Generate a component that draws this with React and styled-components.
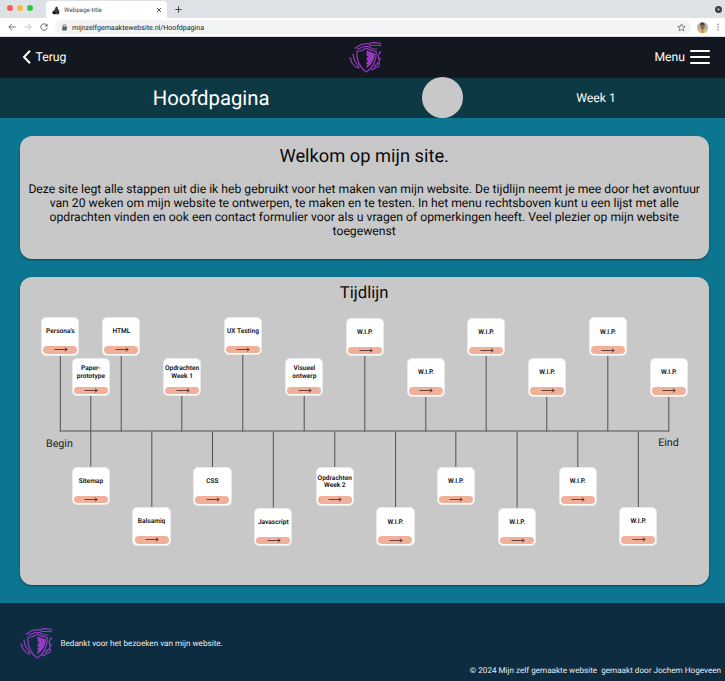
import React from 'react';
import styled, { createGlobalStyle } from 'styled-components';

const GlobalStyle = createGlobalStyle`
  * { box-sizing: border-box; }
  body { margin: 0; font-family: Roboto, "Liberation Sans", sans-serif; text-rendering: geometricPrecision; }
  svg { display: block; flex: none; }
  h1, h2, p { margin: 0; font-weight: 400; }
`;

const Page = styled.div`
  width: 725px;
  height: 681px;
  display: flex;
  flex-direction: column;
  overflow: hidden;
  background: #0c7691;
`;

const TabStrip = styled.div`
  height: 18px;
  flex: none;
  display: flex;
  align-items: flex-start;
  background: #dee1e6;
  padding-left: 6.8px;
  padding-right: 3px;
`;

const TrafficLights = styled.div`
  display: flex;
  gap: 4px;
  margin-top: 5px;
  width: 39.2px;
`;

const Light = styled.i`
  width: 6.1px;
  height: 6.1px;
  border-radius: 50%;
  background: ${(p) => p.$color};
`;

const Tab = styled.div`
  width: 121.5px;
  height: 17px;
  margin-top: 1px;
  display: flex;
  align-items: center;
  padding: 1.4px 5px 0 6px;
  background: #fff;
  border-radius: 4px 4px 0 0;
`;

const TabTitle = styled.span`
  margin-left: 4px;
  flex: 1;
  font-size: 6.2px;
  color: #45484c;
`;

const NewTab = styled.div`
  margin: 6px 0 0 8px;
  flex: 1;
`;

const TabMenu = styled.div`
  margin-top: 6px;
`;

const Toolbar = styled.div`
  height: 19px;
  flex: none;
  display: flex;
  align-items: center;
  background: #fff;
  padding: 0 4px 0 7.5px;
  border-bottom: 1px solid #dadce0;
`;

const NavIcons = styled.div`
  display: flex;
  gap: 8.3px;
  width: 47.5px;
`;

const AddressBar = styled.div`
  width: 636px;
  height: 14px;
  display: flex;
  align-items: center;
  padding: 0 5px 0 7px;
  border-radius: 7px;
  background: #f1f3f4;
`;

const Address = styled.span`
  flex: 1;
  margin-left: 5px;
  font-size: 7.1px;
  color: #202124;
`;

const Avatar = styled.div`
  margin: 0 9px 0 6px;
`;

const SiteNav = styled.header`
  height: 40.5px;
  flex: none;
  display: grid;
  grid-template-columns: 1fr auto 1fr;
  align-items: center;
  padding: 0 15px 0 22px;
  color: #fff;
  background: #13171f;
`;

const NavLink = styled.a`
  display: flex;
  align-items: center;
  justify-self: ${(p) => p.$side};
  gap: 4.5px;
  font-size: 12.2px;
`;

const LogoSlot = styled.div`
  padding-right: 2px;
`;

const Burger = styled.div`
  display: flex;
  flex-direction: column;
  gap: 4px;
  width: 20.5px;
`;

const BurgerBar = styled.i`
  height: 2px;
  border-radius: 1px;
  background: #fff;
`;

const SubHeader = styled.div`
  height: 40.5px;
  flex: none;
  display: grid;
  grid-template-columns: 422.2px 40.7px 1fr;
  align-items: center;
  color: #fff;
  background: #0d3945;
`;

const PageTitle = styled.h1`
  font-size: 20.3px;
  text-align: center;
`;

const Dot = styled.div`
  width: 40.7px;
  height: 40.7px;
  margin-top: -0.6px;
  border-radius: 50%;
  background: #c8c8c8;
`;

const WeekLabel = styled.span`
  padding-left: 4px;
  font-size: 12.2px;
  text-align: center;
`;

const Main = styled.main`
  height: 485.3px;
  flex: none;
  display: flex;
  flex-direction: column;
  gap: 18.4px;
  padding: 18.4px 16.3px 0 19.7px;
`;

const Panel = styled.section`
  height: ${(p) => p.$height}px;
  position: relative;
  flex: none;
  border-radius: 12px;
  background: #c8c8c8;
  color: #0b0b0b;
  text-align: center;
  box-shadow: 0 1px 2px rgba(0, 0, 0, 0.45);
`;

const PanelTitle = styled.h2`
  padding-top: ${(p) => p.$top}px;
  font-size: ${(p) => p.$size}px;
  line-height: 22px;
`;

const Intro = styled.p`
  margin-top: 13.7px;
  font-size: 12.19px;
  line-height: 14.17px;
`;

const IntroLine = styled.span`
  display: block;
  white-space: nowrap;
`;

const Wires = styled.svg`
  position: absolute;
  left: 0;
  top: 0;
`;

const Node = styled.article`
  position: absolute;
  left: ${(p) => p.$x}px;
  top: ${(p) => p.$y}px;
  width: 38.2px;
  height: 38.4px;
  display: flex;
  flex-direction: column;
  padding: 0 1.1px 0.9px;
  border-radius: 5px;
  border: 0.5px solid #e9e9e9;
  background: #fff;
`;

const NodeTitle = styled.div`
  flex: 1;
  display: flex;
  flex-direction: column;
  align-items: center;
  justify-content: center;
  font-size: 6.6px;
  font-weight: 600;
  line-height: 7.5px;
  white-space: nowrap;
  color: #111;
`;

const NodeButton = styled.div`
  height: 7.4px;
  display: flex;
  align-items: center;
  justify-content: center;
  padding-left: 1px;
  border-radius: 4px;
  background: #f1b09a;
`;

const EndLabel = styled.span`
  position: absolute;
  left: ${(p) => p.$x}px;
  top: ${(p) => p.$y}px;
  font-size: 10.7px;
  line-height: 12px;
  color: #1c1c1c;
`;

const Footer = styled.footer`
  flex: 1;
  display: flex;
  flex-direction: column;
  color: #e9eef1;
  background: #0e2c40;
`;

const Thanks = styled.div`
  display: flex;
  align-items: center;
  gap: 7.5px;
  padding: 23.5px 0 0 20px;
  font-size: 8.13px;
`;

const Copyright = styled.div`
  margin-top: 5.5px;
  padding-right: 4px;
  text-align: right;
  font-size: 8.15px;
  line-height: 10px;
  white-space: pre;
`;

function ShieldLogo({ size }) {
  return (
    <svg width={size} height={size} viewBox="-1 -1 33 32" fill="none" stroke="#943bc0" strokeWidth="1.2" strokeLinejoin="round" strokeLinecap="round">
      <path d="M16.300 5.500C13.500 7.800 10.500 8.700 6.800 9c-.3 8.500 2.200 15.500 9.500 20.500 7.500-5 10.200-12 10-20.500-3.800-.3-7-1.200-10-3.500z" />
      <path d="M16.500 7.500c2.500 1.800 5 2.800 8.300 3.200 0 5.800-2.300 10.500-8.300 15v-2.500l1.200-.7-1.200-1v-2l1.700-1-1.700-1.200v-2l2-1-2-1.300z" fill="#943bc0" stroke="none" />
      <path d="M5 5.800l6.500-4 6-.8 3.500 2h7.500M7.500 6.800l7-3 4 .2 4 2.500h4.500M20 .7l3.500-.5 5 .5" />
      <path d="M.5 16l1.200 4.200 3.300 3.500M3 11.500l1.200 5.500 4.600 7.500M5.500 24.500l3.500 1" />
      <path d="M29.800 10l-1.500 2.500.2 4M30.200 15.500l-1.500 4-4.200 4.500M29.500 20.500l-.5 3-6 3.300" />
      <path d="M30 .8v.1M30 3v.1M.4 15.800v.1M30.300 9.700v.1M22 27v.1" strokeWidth="1.8" />
    </svg>
  );
}

function Arrow() {
  return (
    <svg width="14" height="5" viewBox="0 0 14 5" fill="none" stroke="#30221e" strokeWidth=".75">
      <path d="M.5 2.500h12.700M10.800.7l2.400 1.800-2.400 1.800" />
    </svg>
  );
}

const topNodes = [
  { x: 41.3, y: 317.2, lines: ["Persona's"] },
  { x: 71.8, y: 357.8, lines: ['Paper-', 'prototype'] },
  { x: 102.3, y: 317.2, lines: ['HTML'] },
  { x: 163, y: 357.8, lines: ['Opdrachten', 'Week 1'] },
  { x: 223.9, y: 316.6, lines: ['UX Testing'] },
  { x: 285.3, y: 357.8, lines: ['Visueel', 'ontwerp'] },
  { x: 346, y: 318, lines: ['W.I.P.'] },
  { x: 406.8, y: 358.2, lines: ['W.I.P.'] },
  { x: 467.2, y: 318, lines: ['W.I.P.'] },
  { x: 528.1, y: 358.2, lines: ['W.I.P.'] },
  { x: 588.9, y: 317.4, lines: ['W.I.P.'] },
  { x: 649.8, y: 358.2, lines: ['W.I.P.'] },
];

const bottomNodes = [
  { x: 71.8, y: 466.7, lines: ['Sitemap'] },
  { x: 132.5, y: 507.2, lines: ['Balsamiq'] },
  { x: 193.4, y: 467.2, lines: ['CSS'] },
  { x: 254.2, y: 507.8, lines: ['Javascript'] },
  { x: 315.7, y: 467.2, lines: ['Opdrachten', 'Week 2'] },
  { x: 376.4, y: 507.4, lines: ['W.I.P.'] },
  { x: 436.8, y: 466.8, lines: ['W.I.P.'] },
  { x: 498.1, y: 507.8, lines: ['W.I.P.'] },
  { x: 558.6, y: 467.2, lines: ['W.I.P.'] },
  { x: 619.3, y: 507.2, lines: ['W.I.P.'] },
];

const wires = [
  [60, 355, 432], [90.5, 396, 467], [120.9, 355, 432], [151.5, 432, 508],
  [181.5, 396, 432], [212.2, 432, 468], [242.5, 354, 432], [273, 432, 508],
  [303.9, 396, 432], [334.5, 432, 468], [364.5, 356, 432], [395.3, 432, 508],
  [425.5, 396, 432], [455.5, 432, 468], [485.9, 356, 432], [516.8, 432, 508],
  [546.5, 396, 432], [577.5, 432, 468], [607.5, 355, 432], [638, 432, 508],
  [668.5, 396, 432],
];

const ORIGIN_X = 19.7;
const ORIGIN_Y = 277.5;

function TimelineNode({ node }) {
  return (
    <Node $x={node.x - ORIGIN_X} $y={node.y - ORIGIN_Y}>
      <NodeTitle>
        {node.lines.map((line) => <span key={line}>{line}</span>)}
      </NodeTitle>
      <NodeButton><Arrow /></NodeButton>
    </Node>
  );
}

export default function App() {
  return (
    <Page>
      <GlobalStyle />
      <TabStrip>
        <TrafficLights>
          <Light $color="#fc5b57" />
          <Light $color="#fdb63a" />
          <Light $color="#2fc746" />
        </TrafficLights>
        <Tab>
          <svg width="8" height="9" viewBox="0 0 8 9">
            <path d="M4 .5c1.500 0 2 .8 1.800 2L7.500 5.500 7 8.300H1L.3 5.800 2.500 4z" fill="#3c3c3c" />
            <path d="M.5 6.300l2.500-1 1 2.700H1z" fill="#111" />
          </svg>
          <TabTitle>Webpage-title</TabTitle>
          <svg width="6" height="6" viewBox="0 0 6 6" stroke="#3c4043" strokeWidth=".9"><path d="M1 1l4 4M5 1L1 5" /></svg>
        </Tab>
        <NewTab>
          <svg width="7" height="7" viewBox="0 0 7 7" stroke="#3c4043" strokeWidth=".95"><path d="M3.500.3v6.400M.3 3.500h6.400" /></svg>
        </NewTab>
        <TabMenu>
          <svg width="7" height="7" viewBox="0 0 7 7"><circle cx="3.500" cy="3.500" r="3.500" fill="#3c4043" /><path d="M2 2.700h3L3.500 4.800z" fill="#dee1e6" /></svg>
        </TabMenu>
      </TabStrip>
      <Toolbar>
        <NavIcons>
          <svg width="8" height="8" viewBox="0 0 8 8" fill="none" stroke="#5f6368" strokeWidth=".9"><path d="M7.500 4H.9M4 .8L.8 4 4 7.200" /></svg>
          <svg width="8" height="8" viewBox="0 0 8 8" fill="none" stroke="#babcbe" strokeWidth=".9"><path d="M.5 4h6.600M4 .8L7.200 4 4 7.200" /></svg>
          <svg width="8" height="8" viewBox="0 0 8 8" fill="none" stroke="#5f6368" strokeWidth=".95"><path d="M6.700 2.200A3.200 3.200 0 1 0 7.200 4.800" /><path d="M7.500.4v3H4.600z" fill="#5f6368" stroke="none" /></svg>
        </NavIcons>
        <AddressBar>
          <svg width="5" height="7" viewBox="0 0 5 7"><rect x=".2" y="2.500" width="4.600" height="4" rx=".5" fill="#5f6368" /><path d="M1.200 3V1.800a1.300 1.300 0 0 1 2.600 0V3" fill="none" stroke="#5f6368" strokeWidth=".7" /></svg>
          <Address>mijnzelfgemaaktewebsite.nl/Hoofdpagina</Address>
          <svg width="9" height="9" viewBox="0 0 24 24" fill="none" stroke="#5f6368" strokeWidth="2"><path d="M12 2.500l2.900 6.300 6.900.7-5.200 4.600 1.500 6.800-6.100-3.500-6.100 3.500 1.500-6.800-5.200-4.600 6.900-.7z" /></svg>
        </AddressBar>
        <Avatar>
          <svg width="11" height="11" viewBox="0 0 11 11">
            <circle cx="5.500" cy="5.500" r="5.500" fill="#b3b9a5" />
            <path d="M1.500 9.500C2 7.500 4 7 5.500 7s3.500.6 4 2.500A5.500 5.500 0 0 1 1.500 9.500z" fill="#e8c342" />
            <ellipse cx="5.500" cy="4.600" rx="2.200" ry="3" fill="#9a6350" />
            <path d="M3.200 4C3 1 4.300.6 5.500.6S8 1.200 7.800 4l-.8-1.300H4z" fill="#493833" />
            <path d="M4.700 7h1.600l-.3 4h-1z" fill="#a86a5b" />
          </svg>
        </Avatar>
        <svg width="2" height="8" viewBox="0 0 2 8" fill="#5f6368"><circle cx="1" cy="1.200" r=".7" /><circle cx="1" cy="4" r=".7" /><circle cx="1" cy="6.800" r=".7" /></svg>
      </Toolbar>
      <SiteNav>
        <NavLink $side="start">
          <svg width="9" height="14" viewBox="0 0 9 14" fill="none" stroke="#fff" strokeWidth="2"><path d="M8 .8L2 7l6 6.200" /></svg>
          Terug
        </NavLink>
        <LogoSlot><ShieldLogo size={33} /></LogoSlot>
        <NavLink $side="end">
          Menu
          <Burger><BurgerBar /><BurgerBar /><BurgerBar /></Burger>
        </NavLink>
      </SiteNav>
      <SubHeader>
        <PageTitle>Hoofdpagina</PageTitle>
        <Dot />
        <WeekLabel>Week 1</WeekLabel>
      </SubHeader>
      <Main>
        <Panel $height={122.7}>
          <PanelTitle $size={18.3} $top={9.9}>Welkom op mijn site.</PanelTitle>
          <Intro>
            <IntroLine>Deze site legt alle stappen uit die ik heb gebruikt voor het maken van mijn website. De tijdlijn neemt je mee door het avontuur</IntroLine>
            <IntroLine>van 20 weken om mijn website te ontwerpen, te maken en te testen. In het menu rechtsboven kunt u een lijst met alle</IntroLine>
            <IntroLine>opdrachten vinden en ook een contact formulier voor als u vragen of opmerkingen heeft. Veel plezier op mijn website</IntroLine>
            <IntroLine>toegewenst</IntroLine>
          </Intro>
        </Panel>
        <Panel $height={308}>
          <PanelTitle $size={16.7} $top={5.6}>Tijdlijn</PanelTitle>
          <Wires width="689" height="308" viewBox={`${ORIGIN_X} ${ORIGIN_Y} 689 308`} stroke="#515151" strokeWidth="1">
            <path d="M59.500 431.500H669" />
            {wires.map(([x, y1, y2]) => <path key={x} d={`M${x} ${y1}V${y2}`} />)}
          </Wires>
          {topNodes.map((n) => <TimelineNode key={n.x} node={n} />)}
          {bottomNodes.map((n) => <TimelineNode key={n.x} node={n} />)}
          <EndLabel $x={26.3} $y={160.5}>Begin</EndLabel>
          <EndLabel $x={638.5} $y={159.5}>Eind</EndLabel>
        </Panel>
      </Main>
      <Footer>
        <Thanks>
          <ShieldLogo size={33} />
          Bedankt voor het bezoeken van mijn website.
        </Thanks>
        <Copyright>{'© 2024 Mijn zelf gemaakte website  gemaakt door Jochem Hogeveen'}</Copyright>
      </Footer>
    </Page>
  );
}
